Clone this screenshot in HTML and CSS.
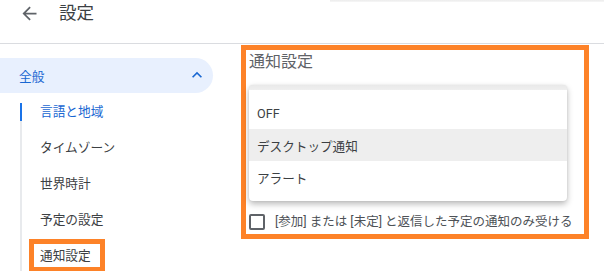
FILE: index.html
```html
<!DOCTYPE html>
<html lang="ja">
<head>
<meta charset="utf-8">
<link rel="stylesheet" href="styles.css">
</head>
<body>
<header class="topbar">
  <svg class="back" viewBox="0 0 24 24" width="21" height="21"><path d="M20 11H7.83l5.59-5.59L12 4l-8 8 8 8 1.41-1.41L7.83 13H20v-2z"/></svg>
  <span class="title">設定</span>
  <div class="search-edge"></div>
</header>
<div class="layout">
  <nav class="sidebar">
    <div class="group-row">
      <span>全般</span>
      <svg class="chev" viewBox="0 0 24 24" width="20" height="20"><path d="M12 8l-6 6 1.41 1.41L12 10.83l4.59 4.58L18 14z"/></svg>
    </div>
    <ul class="sublist">
      <li class="sub active">言語と地域</li>
      <li class="sub">タイムゾーン</li>
      <li class="sub">世界時計</li>
      <li class="sub">予定の設定</li>
      <li class="sub"><span class="mark">通知設定</span></li>
    </ul>
  </nav>
  <main class="content">
    <section class="panel">
      <h2 class="heading">通知設定</h2>
      <div class="menu">
        <div class="item">OFF</div>
        <div class="item hover">デスクトップ通知</div>
        <div class="item">アラート</div>
      </div>
      <label class="check-row">
        <span class="box"></span>
        <span class="label">[参加] または [未定] と返信した予定の通知のみ受ける</span>
      </label>
    </section>
  </main>
</div>
</body>
</html>
```
FILE: styles.css
```css
* { box-sizing: border-box; }
html, body { margin: 0; padding: 0; background: #fff; }
body {
  font-family: Roboto, "Noto Sans CJK JP", sans-serif;
  color: #3c4043;
  width: 604px;
  height: 271px;
  overflow: hidden;
}
.topbar {
  height: 44px;
  border-bottom: 1px solid #dadce0;
  display: flex;
  align-items: flex-start;
}
.back {
  fill: #5f6368;
  margin: 3px 0 0 19px;
  flex: none;
}
.title {
  font-size: 17.5px;
  line-height: 22px;
  margin: 2px 0 0 19px;
  color: #3c4043;
}
.search-edge {
  margin-left: auto;
  width: 274px;
  height: 2px;
  background: linear-gradient(#ececec, #f7f7f7);
}
.layout { display: flex; }
.sidebar {
  width: 241px;
  flex: none;
  padding-top: 14px;
}
.group-row {
  width: 213px;
  height: 35px;
  background: #e8f0fe;
  border-radius: 0 18px 18px 0;
  display: flex;
  align-items: center;
  justify-content: space-between;
  padding: 0 6px 0 19px;
  color: #1967d2;
  font-size: 12.7px;
}
.chev { fill: #1967d2; margin-top: -1px; }
.sublist {
  list-style: none;
  margin: 10px 0 0 20px;
  padding: 0 0 0 20px;
  background:
    linear-gradient(#1a73e8, #1a73e8) 0 0 / 2px 18px no-repeat,
    linear-gradient(#e8eaed, #e8eaed) 0 0 / 2px 100% no-repeat;
}
.sub {
  height: 36px;
  font-size: 12.7px;
  line-height: 17px;
  color: #3c4043;
}
.sub.active { color: #1967d2; }
.mark {
  display: inline-block;
  border: 5px solid #fd8228;
  padding: 3px 9px 3px 6px;
  margin: -8px 0 0 -11px;
  background: #fff;
}
.content { flex: 1; padding-top: 1px; }
.panel {
  width: 348px;
  border: 5px solid #fd8228;
  padding: 2px 17px 4px 3px;
}
.heading {
  margin: 0;
  font-weight: 400;
  font-size: 16px;
  line-height: 19px;
  color: #5f6368;
}
.menu {
  margin-top: 14px;
  background: #fff;
  border-radius: 4px;
  box-shadow: 0 3px 6px rgba(0,0,0,0.28), 0 0 2px rgba(0,0,0,0.08);
  padding: 12px 0 8px;
  background-image: linear-gradient(#e9e9e9, #efefef);
  background-size: 100% 5px;
  background-repeat: no-repeat;
}
.item {
  height: 32px;
  display: flex;
  align-items: center;
  padding: 0 8px;
  font-size: 12.6px;
  color: #3c4043;
}
.item.hover { background: #eeeeee; }
.check-row {
  display: flex;
  align-items: center;
  margin-top: 12px;
}
.box {
  width: 16px;
  height: 16px;
  border: 2px solid #5f6368;
  border-radius: 2px;
  flex: none;
}
.label {
  margin-left: 10px;
  font-size: 12.5px;
  line-height: 17px;
  color: #4d5156;
  white-space: nowrap;
}
```
